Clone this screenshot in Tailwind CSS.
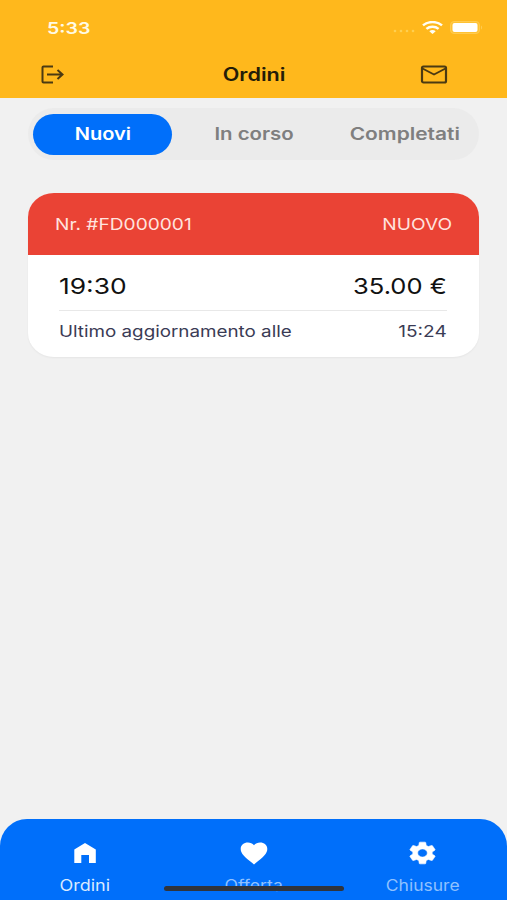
<!DOCTYPE html>
<html lang="it">
  <head>
    <meta charset="UTF-8" />
    <meta name="viewport" content="width=device-width, initial-scale=1.0" />
    <title>Ordini</title>
    <script src="https://cdn.jsdelivr.net/npm/@tailwindcss/browser@4"></script>
  </head>
  <body
    class="flex h-screen flex-col overflow-hidden bg-[#f1f1f1] font-['Inter','Liberation_Sans',sans-serif]"
  >
    <!-- Header -->
    <header class="h-[98px] shrink-0 bg-[#ffb81c]">
      <div class="flex h-[54px] items-center justify-between pl-[47px] pr-[24px]">
        <span class="origin-left scale-x-[1.22] pt-px text-[16px] font-semibold text-[#fffbe6]">5:33</span>
        <div class="flex items-center">
          <svg class="mt-[8px] h-1 w-[22px]" viewBox="0 0 22 4" fill="#ffcf50">
            <circle cx="2" cy="2" r="1.3" />
            <circle cx="8" cy="2" r="1.3" />
            <circle cx="14" cy="2" r="1.3" />
            <circle cx="20" cy="2" r="1.3" />
          </svg>
          <svg class="ml-[7px] h-[13px] w-[21px]" viewBox="0 0 21 13" fill="none" stroke="#fffef5" stroke-width="2.5">
            <path d="M1 4.400C6 0 15 0 20 4.400" />
            <path d="M4.400 7.900c3.400-2.900 8.800-2.900 12.200 0" />
            <path d="M7.300 10.200c1.800-1.600 4.600-1.600 6.400 0l-3.200 2.800z" fill="#fffef5" stroke="none" />
          </svg>
          <svg class="ml-[7px] h-[13px] w-[33px]" viewBox="0 0 33 13">
            <rect x=".5" y=".5" width="29" height="12" rx="3.5" fill="#ffc232" stroke="#ffcb50" />
            <rect x="2.500" y="2" width="25" height="9" rx="2" fill="#fff" />
            <path d="M31 4.500c1.500.6 1.500 3.400 0 4z" fill="#ffcb50" />
          </svg>
        </div>
      </div>
      <div class="grid h-[40px] grid-cols-[1fr_auto_1fr] items-center pl-[41px] pr-[59px]">
        <svg class="h-[19px] w-[24px]" viewBox="0 0 24 19" fill="none" stroke="#4b3a12" stroke-width="2">
          <path d="M12 1.500H2.500Q1.500 1.500 1.500 2.500v14q0 1 1 1h9.500" />
          <path d="M6 9.500h15.500M16.500 5l5 4.500-5 4.500" />
        </svg>
        <h1 class="ml-[20px] scale-x-[1.2] text-[18px] font-semibold text-[#241c08]">Ordini</h1>
        <svg class="h-[19px] w-[28px] justify-self-end" viewBox="0 0 28 19" fill="none" stroke="#4b3a12" stroke-width="2.200">
          <rect x="2" y="1.500" width="24" height="16" rx="1.500" />
          <path d="M2.500 3.500L14 9.500 25.500 3.500" stroke-width="1.900" />
        </svg>
      </div>
    </header>

    <!-- Tabs -->
    <div
      class="mx-[28px] mt-[10px] grid h-[52px] shrink-0 grid-cols-3 items-center rounded-full bg-[#ebebeb] px-[5px] text-[17px] font-semibold text-[#7f7f7f]"
    >
      <button class="flex h-[41px] w-[139px] items-center justify-center rounded-full bg-[#006ffa] text-white">
        <span class="scale-x-[1.18] pt-[2px]">Nuovi</span>
      </button>
      <button class="flex justify-center pt-[2px] pl-[2px]"><span class="scale-x-[1.2]">In corso</span></button>
      <button class="flex justify-center pt-[2px] pl-[8px]"><span class="scale-x-[1.23]">Completati</span></button>
    </div>

    <!-- Order card -->
    <div class="mx-[28px] mt-[33px] h-[164px] shrink-0 overflow-hidden rounded-[26px/24px] bg-white shadow-xs">
      <div class="flex h-[62px] items-center justify-between bg-[#ea4335] px-[27px] text-[16.500px] text-[#ffe3df]">
        <span class="origin-left scale-x-[1.16]">Nr. #FD000001</span>
        <span class="origin-right scale-x-[1.16]">NUOVO</span>
      </div>
      <div class="pl-[31px] pr-[32px]">
        <div class="flex h-[56px] items-center justify-between border-b border-[#e8e8e8] pt-[7px] text-[22px] text-[#111]">
          <span class="origin-left scale-x-[1.2]">19:30</span>
          <span class="origin-right scale-x-[1.16]">35.00 €</span>
        </div>
        <div class="flex h-[40px] items-center justify-between text-[16px] text-[#3a3b55]">
          <span class="origin-left scale-x-[1.175]">Ultimo aggiornamento alle</span>
          <span class="origin-right scale-x-[1.19]">15:24</span>
        </div>
      </div>
    </div>

    <!-- Bottom navigation -->
    <nav
      class="relative mt-auto grid h-[81px] shrink-0 grid-cols-3 rounded-t-[27px] bg-[#006ffa] pt-[21px] text-[15.500px] text-[#8fc1ff]"
    >
      <a class="flex flex-col items-center gap-[10px] text-[#d9eaff]">
        <svg class="h-[26px] w-[26px]" viewBox="0 0 26 26" fill="#fff">
          <path d="M2.300 23V9.500L13 3l10.800 6.500V23H17v-8H9.300v8z" />
        </svg>
        <span class="scale-x-[1.16] leading-[20px]">Ordini</span>
      </a>
      <a class="flex flex-col items-center gap-[10px]">
        <svg class="h-[26px] w-[28px]" viewBox="0 0 28 26" fill="#fff">
          <path d="M14 24.500L12 22.800C5 17 .7 13.500.7 8.900.7 5.100 3.900 2.500 7.900 2.500c2.400 0 4.600 1 6.100 2.700 1.500-1.700 3.700-2.700 6.100-2.700 4 0 7.200 2.600 7.200 6.400 0 4.600-4.300 8.100-11.300 13.900z" />
        </svg>
        <span class="scale-x-[1.14] leading-[20px]">Offerta</span>
      </a>
      <a class="flex flex-col items-center gap-[10px]">
        <svg class="h-[26px] w-[31px]" viewBox="0.5 0.5 23 23" preserveAspectRatio="none" fill="#fff" stroke="#fff" stroke-width=".5">
          <path d="M19.140 12.940c.04-.3.060-.61.060-.94 0-.32-.02-.64-.07-.94l2.030-1.580c.18-.14.230-.41.120-.61l-1.920-3.320c-.12-.22-.37-.29-.59-.22l-2.390.96c-.5-.38-1.030-.7-1.620-.94l-.36-2.540c-.04-.24-.24-.41-.48-.41h-3.840c-.24 0-.43.170-.47.410l-.36 2.540c-.59.240-1.130.570-1.620.940l-2.390-.96c-.22-.08-.47 0-.59.220L2.740 8.870c-.12.210-.08.470.120.610l2.030 1.580c-.05.300-.09.630-.09.940s.02.640.070.940l-2.030 1.580c-.18.140-.23.410-.12.610l1.920 3.320c.12.220.370.290.590.220l2.390-.96c.5.380 1.030.700 1.620.940l.36 2.540c.05.240.240.410.480.410h3.840c.24 0 .44-.17.470-.41l.36-2.540c.59-.24 1.130-.56 1.620-.94l2.390.96c.22.080.470 0 .59-.22l1.920-3.320c.12-.22.070-.47-.12-.61l-2.010-1.580zM12 15.600c-1.980 0-3.600-1.620-3.600-3.600s1.620-3.600 3.600-3.600 3.600 1.620 3.600 3.600-1.620 3.600-3.600 3.600z" />
        </svg>
        <span class="scale-x-[1.13] leading-[20px]">Chiusure</span>
      </a>
      <!-- Home indicator -->
      <div class="absolute bottom-[9px] left-[164px] h-[5px] w-[180px] rounded-full bg-[#30343b]"></div>
    </nav>
  </body>
</html>
